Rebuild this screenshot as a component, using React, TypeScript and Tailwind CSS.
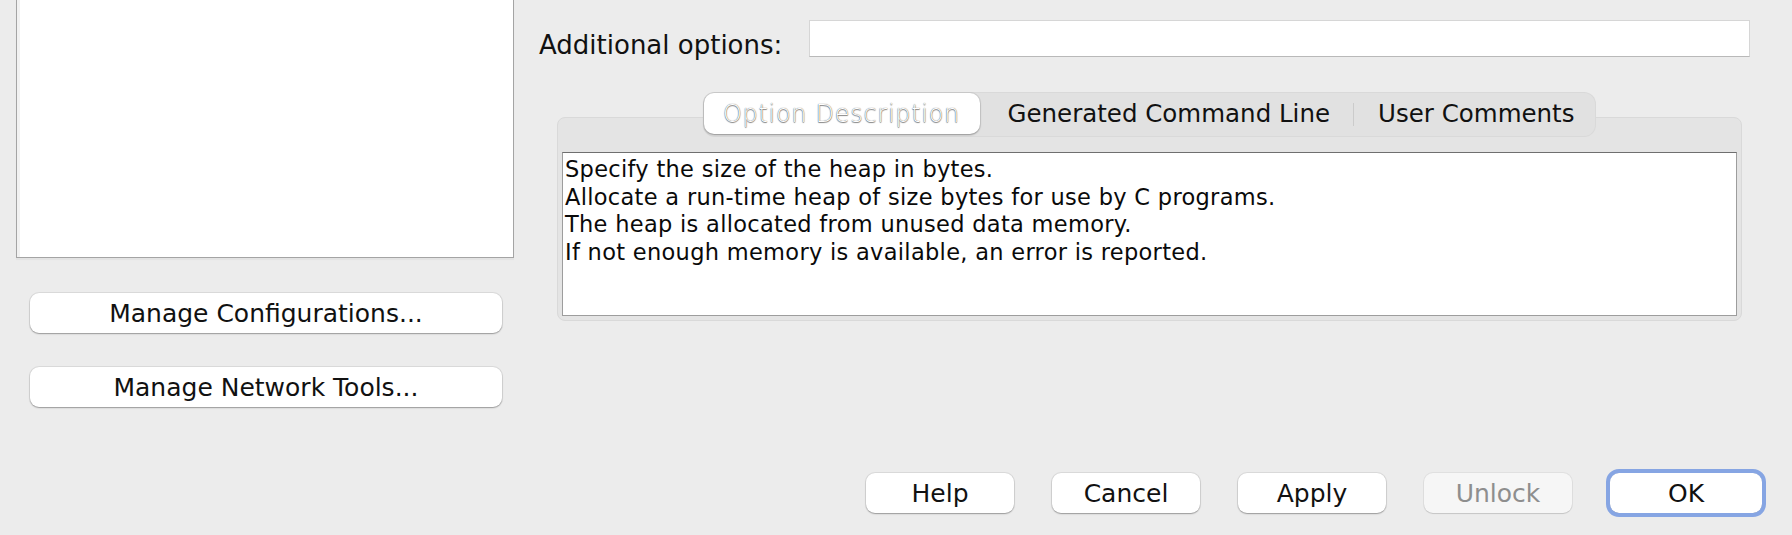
import React from 'react'

const ui = { fontFamily: '"DejaVu Sans", Verdana, sans-serif' }

const description = [
  'Specify the size of the heap in bytes.',
  'Allocate a run-time heap of size bytes for use by C programs.',
  'The heap is allocated from unused data memory.',
  'If not enough memory is available, an error is reported.',
]

function MacButton({
  label,
  className = '',
  disabled = false,
  focused = false,
}: {
  label: string
  className?: string
  disabled?: boolean
  focused?: boolean
}) {
  return (
    <button
      type="button"
      disabled={disabled}
      className={`flex h-[40px] items-center justify-center rounded-[9px] text-[25px] leading-none ${
        disabled
          ? 'bg-[#f6f6f6] text-[#8e8e8e] shadow-[0_0_0_1px_rgba(0,0,0,0.05),0_1px_1px_rgba(0,0,0,0.12)]'
          : 'bg-white text-[#111] shadow-[0_0_0_1px_rgba(0,0,0,0.07),0_1px_1.5px_rgba(0,0,0,0.3)]'
      } ${focused ? 'outline-[4px] outline-solid outline-offset-0 outline-[#86a5e3]' : ''} ${className}`}
      style={ui}
    >
      {label}
    </button>
  )
}

export default function App() {
  return (
    <div className="flex h-[535px] w-[1792px] overflow-hidden bg-[#ececec]" style={ui}>
      {/* left column */}
      <div className="flex w-[539px] flex-col pl-[16px]">
        <div className="h-[258px] w-[498px] border-x border-b border-[#a4a4a4] bg-white shadow-[inset_3px_0_0_#f1f1f1,0_2px_1px_#e3e3e3]" />
        <MacButton label="Manage Configurations..." className="ml-[14px] mt-[35px] w-[472px]" />
        <MacButton label="Manage Network Tools..." className="ml-[14px] mt-[34px] w-[472px]" />
      </div>

      {/* right column */}
      <div className="flex flex-1 flex-col">
        <div className="mt-[20px] flex h-[37px] items-end pr-[42px]">
          <span className="mb-[-1px] w-[270px] text-[26px] leading-none text-[#111]">Additional options:</span>
          <div className="h-[37px] flex-1 border border-[#d6d6d6] border-b-[#b9b9b9] bg-white" />
        </div>

        <div className="mt-[36px] flex flex-col pl-[18px] pr-[50px]">
          <div className="relative z-10 flex justify-center">
            <div className="flex h-[43px] items-stretch rounded-[11px] bg-[#e1e1e1] shadow-[0_0_0_1px_#d9d9d9]">
              <div className="flex h-[41px] w-[276px] items-center justify-center rounded-[10px] bg-white shadow-[0_0_0_1px_rgba(0,0,0,0.06),0_1px_2px_rgba(0,0,0,0.3)]">
                <span className="text-[24px] font-light leading-none tracking-[0.7px] text-white [text-shadow:0_0_1px_#444,0_1px_1px_#888]">
                  Option Description
                </span>
              </div>
              <div className="flex items-center pl-[28px] pr-[23px] text-[24.5px] leading-none text-[#111]">Generated Command Line</div>
              <div className="my-[10px] w-px bg-[#cbcbcb]" />
              <div className="flex items-center pl-[24px] pr-[21px] text-[24.5px] leading-none text-[#111]">User Comments</div>
            </div>
          </div>

          <div className="-mt-[19px] rounded-[8px] border border-[#d9d9d9] bg-[#e4e4e4] px-[4px] pb-[4px] pt-[34px]">
            <div className="h-[164px] border border-[#9d9d9d] border-t-[#6f6f6f] bg-white px-[2px] pt-[3px]">
              {description.map((line) => (
                <p key={line} className="text-[22.5px] leading-[27.5px] tracking-[0.3px] text-[#0a0a0a]">
                  {line}
                </p>
              ))}
            </div>
          </div>
        </div>

        <div className="mb-[22px] mt-auto flex justify-end gap-[38px] pr-[30px]">
          <MacButton label="Help" className="w-[148px]" />
          <MacButton label="Cancel" className="w-[148px]" />
          <MacButton label="Apply" className="w-[148px]" />
          <MacButton label="Unlock" className="w-[148px]" disabled />
          <MacButton label="OK" className="w-[152px]" focused />
        </div>
      </div>
    </div>
  )
}
